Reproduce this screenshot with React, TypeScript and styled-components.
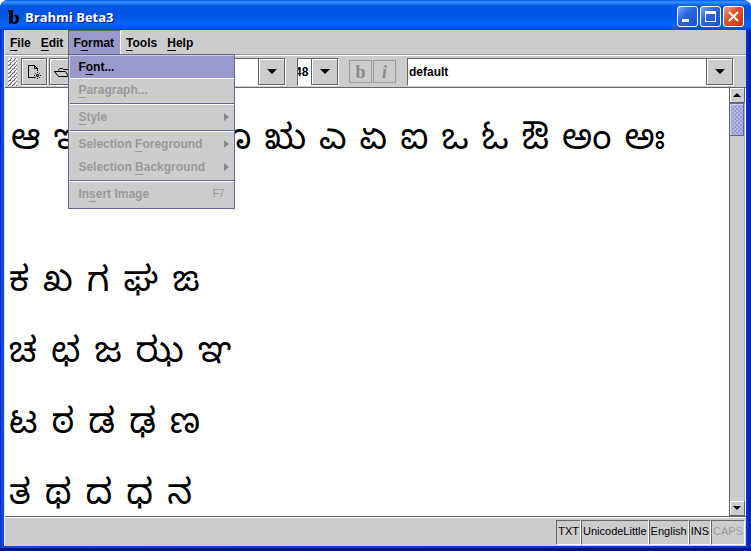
import React, { Fragment } from 'react';
import styled, { createGlobalStyle, css } from 'styled-components';

const ink = '#666666';
const face = '#cccccc';
const lilac = '#9999cc';
const mutedInk = '#999999';

const GlobalStyle = createGlobalStyle`
  *, *::before, *::after { box-sizing: border-box; }
  html, body, #root { height: 100%; }
  body { margin: 0; background: #fff; }
  body, button, input { font: bold 12px/16px "Liberation Sans", Arial, sans-serif; color: #000; }
  button, input { margin: 0; padding: 0; border: 0; border-radius: 0; background: none; }
`;

const Frame = styled.div`
  display: flex;
  flex-direction: column;
  height: 100vh;
  overflow: hidden;
  padding: 0 5px 5px 4px;
  border-radius: 8px 8px 0 0;
  background: linear-gradient(to right, #0019cf 0, #0855dd 2px, #1444d8 4px, #0831d9 calc(100% - 4px), #001ea0 100%);
  box-shadow: inset 0 -3px 0 #00138c;
`;

const TitleBar = styled.header`
  display: flex;
  align-items: center;
  flex: none;
  height: 30px;
  margin: 0 -5px 0 -4px;
  padding: 3px 7px 0 8px;
  background: linear-gradient(#0058e6 0, #3a93ff 2px, #0055e5 6px, #0054e3 14px, #0462f8 22px, #0462f8 26px, #0046d4 30px);
`;

const Logo = styled.svg`
  flex: none;
  width: 12px;
  height: 14px;
`;

const Caption = styled.h1`
  flex: 1;
  margin: 0 0 0 5px;
  color: #fff;
  font: bold 13px/20px "Open Sans", sans-serif;
  text-shadow: 1px 1px 0 #0a1883;
`;

const WindowButtons = styled.div`
  display: flex;
  gap: 2px;
`;

const WindowButton = styled.button<{ $close?: boolean }>`
  display: grid;
  place-items: center;
  width: 21px;
  height: 21px;
  border: 1px solid #fff;
  border-radius: 3px;
  background: ${(p) =>
    p.$close
      ? 'linear-gradient(135deg, #f0a58c 0, #e0532c 40%, #c5380f 100%)'
      : 'linear-gradient(135deg, #7ea6f4 0, #2c66e0 40%, #1c51cf 100%)'};
  svg { width: 17px; height: 17px; }
`;

const Client = styled.div`
  display: flex;
  flex: 1;
  flex-direction: column;
  min-height: 0;
  background: ${face};
  border-left: 1px solid #dfe3f0;
`;

const MenuBar = styled.nav`
  display: flex;
  flex: none;
  height: 25px;
  border-bottom: 1px solid #999;
`;

const MenuSlot = styled.div`
  position: relative;
`;

const MenuButton = styled.button<{ $open?: boolean }>`
  height: 24px;
  padding: 0 4px;
  border: 1px solid transparent;
  border-bottom: 0;
  ${(p) => p.$open && css`
    height: 25px;
    padding-right: 6px;
    background: ${lilac};
    border-color: ${ink} #fff ${ink} ${ink};
  `}
`;

const Mnemonic = styled.span`
  text-decoration: underline 1px;
  text-decoration-skip-ink: none;
  text-underline-offset: 3px;
`;

const Popup = styled.div`
  position: absolute;
  z-index: 2;
  top: 24px;
  left: 0;
  width: 167px;
  padding: 1px 0 2px 1px;
  background: ${face};
  border: 1px solid #666699;
`;

const PopupItem = styled.button<{ $active?: boolean }>`
  display: flex;
  align-items: center;
  justify-content: space-between;
  width: 100%;
  height: 23px;
  padding: 0 5px 0 8px;
  white-space: nowrap;
  background: ${(p) => (p.$active ? lilac : 'transparent')};
  border-bottom: 1px solid ${(p) => (p.$active ? '#fff' : 'transparent')};
  color: ${(p) => (p.$active ? '#000' : mutedInk)};
`;

const Separator = styled.hr`
  height: 2px;
  margin: 1px 0;
  border: 0;
  border-top: 1px solid #666699;
  border-bottom: 1px solid #fff;
`;

const Shortcut = styled.kbd`
  padding-right: 5px;
  font: 10px/16px "Liberation Sans", Arial, sans-serif;
`;

const SubArrow = styled.svg`
  width: 5px;
  height: 8px;
  fill: #888;
`;

const ToolBar = styled.div`
  display: flex;
  flex: none;
  align-items: center;
  height: 33px;
  padding: 0 12px 0 3px;
  border-top: 1px solid #fff;
  border-bottom: 1px solid ${ink};
`;

const Grip = styled.div`
  flex: none;
  width: 9px;
  height: 28px;
  margin-right: 4px;
  background:
    radial-gradient(circle at 1px 1px, #fff 1px, transparent 1px) 0 0 / 4px 4px,
    radial-gradient(circle at 1px 1px, #777 1px, transparent 1px) 1px 1px / 4px 4px,
    radial-gradient(circle at 1px 1px, #fff 1px, transparent 1px) 2px 2px / 4px 4px,
    radial-gradient(circle at 1px 1px, #777 1px, transparent 1px) 3px 3px / 4px 4px;
`;

const ToolButton = styled.button`
  display: grid;
  flex: none;
  place-items: center;
  width: 26px;
  height: 27px;
  margin-right: 2px;
  border: 1px solid ${ink};
  box-shadow: inset 1px 1px 0 #fff, 1px 1px 0 #fff;
  svg { width: 16px; height: 16px; }
`;

const StyleButton = styled.button<{ $italic?: boolean }>`
  flex: none;
  width: 23px;
  height: 23px;
  margin-right: 1px;
  border: 1px solid ${mutedInk};
  color: #888;
  font: bold ${(p) => (p.$italic ? 'italic' : 'normal')} 18px/18px "Liberation Serif", serif;
`;

const StyleGroup = styled.div`
  display: flex;
  flex: none;
  margin: 0 10px;
`;

const widths = { family: '198px', size: '42px' };

const Combo = styled.div<{ $kind?: keyof typeof widths }>`
  display: flex;
  flex: ${(p) => (p.$kind ? 'none' : '1')};
  width: ${(p) => (p.$kind ? widths[p.$kind] : 'auto')};
  height: 28px;
  margin-left: ${(p) => (p.$kind ? '11px' : '0')};
  border: 1px solid ${ink};
  border-right-color: #fff;
  border-bottom-color: #fff;
  background: #fff;
`;

const ComboInput = styled.input<{ $scrolled?: boolean }>`
  flex: 1;
  min-width: 0;
  outline: 0;
  text-indent: ${(p) => (p.$scrolled ? '-3px' : '1px')};
`;

const ComboButton = styled.button`
  display: grid;
  flex: none;
  place-items: center;
  width: 27px;
  background: ${face};
  border: 1px solid ${ink};
  border-top: 0;
  box-shadow: inset 1px 1px 0 #fff;
  svg { width: 10px; height: 5px; }
`;

const Workspace = styled.main`
  display: flex;
  flex: 1;
  min-height: 0;
  border-bottom: 1px solid ${ink};
`;

const Document = styled.div`
  flex: 1;
  overflow: hidden;
  padding: 21px 4px 0;
  background: #fff;
  font: 35px/71px "Noto Sans Kannada", "Noto Sans", sans-serif;
`;

const Line = styled.p<{ $wide?: boolean }>`
  display: flex;
  gap: ${(p) => (p.$wide ? '13px' : '14px')};
  height: 71px;
  margin: 0;
  padding-left: ${(p) => (p.$wide ? '2px' : '0')};
  white-space: nowrap;
`;

const ScrollBar = styled.div`
  display: flex;
  flex: none;
  flex-direction: column;
  width: 17px;
  border-left: 1px solid ${ink};
  border-right: 1px solid #fff;
`;

const ScrollButton = styled.button`
  display: grid;
  flex: none;
  place-items: center;
  height: 15px;
  border: 1px solid ${ink};
  border-width: 0 1px 1px 0;
  box-shadow: inset 1px 1px 0 #fff;
  svg { width: 8px; height: 4px; }
`;

const ScrollTrack = styled.div`
  flex: 1;
  border-right: 1px solid #b4b4b4;
`;

const ScrollThumb = styled.div`
  height: 33px;
  border: 1px solid #666699;
  border-left: 0;
  background:
    radial-gradient(circle at 1px 1px, #b8b8e6 1px, transparent 1px) 0 0 / 4px 4px,
    radial-gradient(circle at 1px 1px, #b8b8e6 1px, transparent 1px) 2px 2px / 4px 4px,
    ${lilac};
  box-shadow: inset 1px 1px 0 #ccccff;
`;

const StatusBar = styled.footer`
  display: flex;
  flex: none;
  justify-content: flex-end;
  height: 29px;
  padding: 2px 1px 1px;
  border-top: 1px solid #fff;
`;

const StatusCell = styled.span<{ $off?: boolean }>`
  padding: 2px 1px 0;
  border: 1px solid ${ink};
  border-right-color: #fff;
  border-bottom-color: #fff;
  color: ${(p) => (p.$off ? mutedInk : '#000')};
  font: 11px/16px "Liberation Sans", Arial, sans-serif;
`;

const Key = ({ text, at }: { text: string; at: number }) => (
  <span>{text.slice(0, at)}<Mnemonic>{text[at]}</Mnemonic>{text.slice(at + 1)}</span>
);

const Down = () => <svg viewBox="0 0 10 5" aria-hidden="true"><path d="M0 0h10L5 5z" /></svg>;
const Up = () => <svg viewBox="0 0 8 4" aria-hidden="true"><path d="M0 4h8L4 0z" /></svg>;

const menus = [
  { text: 'File', at: 0 },
  { text: 'Edit', at: 0 },
  { text: 'Format', at: 1 },
  { text: 'Tools', at: 0 },
  { text: 'Help', at: 0 },
];

const formatItems = [
  { text: 'Font...', at: 1, active: true },
  { text: 'Paragraph...', at: 0, rule: true },
  { text: 'Style', at: 0, sub: true, rule: true },
  { text: 'Selection Foreground', at: 10, sub: true },
  { text: 'Selection Background', at: 10, sub: true, rule: true },
  { text: 'Insert Image', at: 2, keys: 'F7' },
];

const lines = [
  { text: 'ಆ ಇ ಈ ಉ ಊ ಋ ಎ ಏ ಐ ಒ ಓ ಔ ಅಂ ಅಃ', wide: true },
  { text: '' },
  { text: 'ಕ ಖ ಗ ಘ ಙ' },
  { text: 'ಚ ಛ ಜ ಝ ಞ' },
  { text: 'ಟ ಠ ಡ ಢ ಣ' },
  { text: 'ತ ಥ ದ ಧ ನ' },
];

export default function App() {
  return (
    <Frame>
      <GlobalStyle />
      <TitleBar>
        <Logo viewBox="0 0 12 14" aria-hidden="true">
          <path
            fillRule="evenodd"
            d="M1 0h4v6c1-1 2-1 3-1 2 0 3 2 3 4 0 3-2 5-5 5-1 0-2-1-3-1l-1 1H1V2H0V1zM5 7v4c0 1 1 2 2 1 1-1 1-5 0-6-1 0-2 0-2 1z"
          />
        </Logo>
        <Caption>Brahmi Beta3</Caption>
        <WindowButtons>
          <WindowButton aria-label="Minimize">
            <svg viewBox="0 0 17 17"><path d="M3 11h7v3H3z" fill="#fff" /></svg>
          </WindowButton>
          <WindowButton aria-label="Maximize">
            <svg viewBox="0 0 17 17"><path d="M3 3h11v11H3zM4 6v7h9V6z" fill="#fff" fillRule="evenodd" /></svg>
          </WindowButton>
          <WindowButton aria-label="Close" $close>
            <svg viewBox="0 0 17 17"><path d="M4 4l9 9M13 4l-9 9" stroke="#fff" strokeWidth="2" /></svg>
          </WindowButton>
        </WindowButtons>
      </TitleBar>
      <Client>
        <MenuBar>
          {menus.map((m) => (
            <MenuSlot key={m.text}>
              <MenuButton $open={m.text === 'Format'}><Key text={m.text} at={m.at} /></MenuButton>
              {m.text === 'Format' && (
                <Popup role="menu">
                  {formatItems.map((i) => (
                    <Fragment key={i.text}>
                      <PopupItem role="menuitem" $active={i.active} disabled={!i.active}>
                        <Key text={i.text} at={i.at} />
                        {i.sub && <SubArrow viewBox="0 0 5 8"><path d="M0 0l5 4-5 4z" /></SubArrow>}
                        {i.keys && <Shortcut>{i.keys}</Shortcut>}
                      </PopupItem>
                      {i.rule && <Separator />}
                    </Fragment>
                  ))}
                </Popup>
              )}
            </MenuSlot>
          ))}
        </MenuBar>
        <ToolBar>
          <Grip />
          <ToolButton aria-label="New">
            <svg viewBox="0 0 16 16" fill="none" stroke="#000">
              <path d="M9 13.500H2.500v-12h6l3 3V7M8.500 1.500v3h3" />
              <path d="M11.500 8v7M8 11.500h7M9 9l5 5M14 9l-5 5" strokeDasharray="1 1" />
            </svg>
          </ToolButton>
          <ToolButton aria-label="Open">
            <svg viewBox="0 0 16 16" fill="none" stroke="#000">
              <path d="M4.500 6.500l1-2h3l1 1h5v7h-10l-4-5h11l3 5" />
            </svg>
          </ToolButton>
          <Combo $kind="family">
            <ComboInput aria-label="Font family" />
            <ComboButton aria-label="Choose font family"><Down /></ComboButton>
          </Combo>
          <Combo $kind="size">
            <ComboInput aria-label="Font size" defaultValue="48" $scrolled />
            <ComboButton aria-label="Choose font size"><Down /></ComboButton>
          </Combo>
          <StyleGroup>
            <StyleButton aria-label="Bold" disabled>b</StyleButton>
            <StyleButton aria-label="Italic" disabled $italic>i</StyleButton>
          </StyleGroup>
          <Combo>
            <ComboInput aria-label="Paragraph style" defaultValue="default" />
            <ComboButton aria-label="Choose paragraph style"><Down /></ComboButton>
          </Combo>
        </ToolBar>
        <Workspace>
          <Document lang="kn">
            {lines.map((l, n) => (
              <Line key={n} $wide={l.wide}>
                {l.text.split(' ').map((c) => <span key={c}>{c}</span>)}
              </Line>
            ))}
          </Document>
          <ScrollBar>
            <ScrollButton aria-label="Scroll up"><Up /></ScrollButton>
            <ScrollTrack><ScrollThumb /></ScrollTrack>
            <ScrollButton aria-label="Scroll down"><Down /></ScrollButton>
          </ScrollBar>
        </Workspace>
        <StatusBar>
          <StatusCell>TXT</StatusCell>
          <StatusCell>UnicodeLittle</StatusCell>
          <StatusCell>English</StatusCell>
          <StatusCell>INS</StatusCell>
          <StatusCell $off>CAPS</StatusCell>
        </StatusBar>
      </Client>
    </Frame>
  );
}
